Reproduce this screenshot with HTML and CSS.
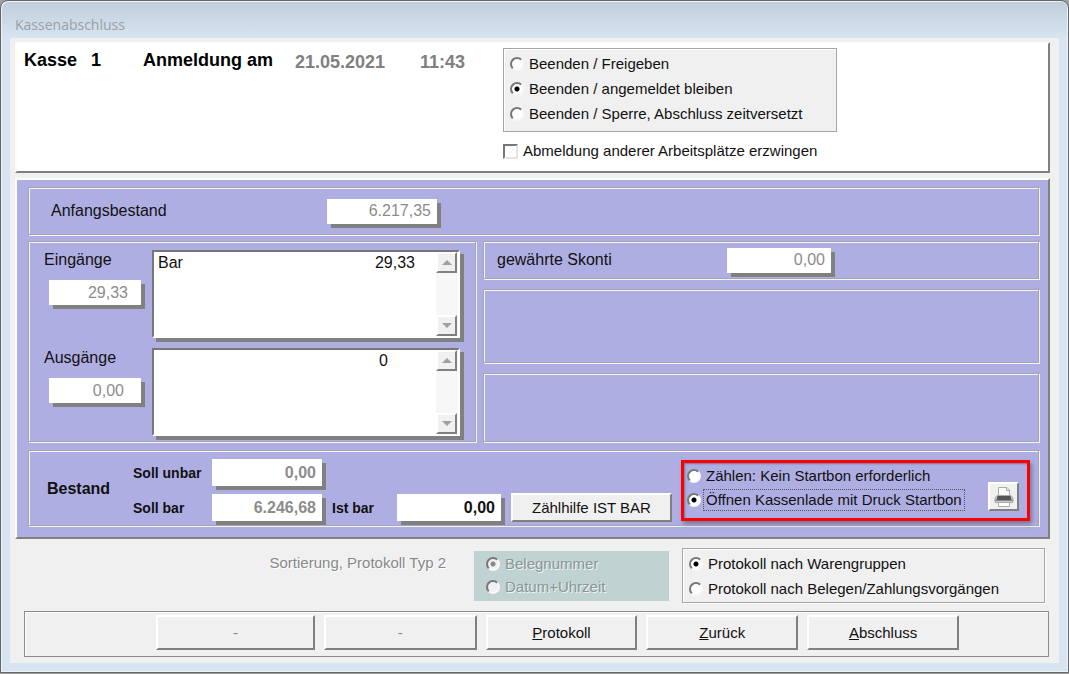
FILE: index.html
```html
<!DOCTYPE html>
<html lang="de">
<head>
<meta charset="utf-8">
<title>Kassenabschluss</title>
<link rel="stylesheet" href="styles.css">
</head>
<body>
<main class="window">
  <h1 class="titlebar">Kassenabschluss</h1>
  <form class="client">
    <section class="panel session">
      <div class="session-info">
        <span class="register">Kasse</span>
        <span class="register-no">1</span>
        <span class="login-label">Anmeldung am</span>
        <span class="login-date">21.05.2021</span>
        <span class="login-time">11:43</span>
      </div>
      <div class="session-options">
        <div class="etched finish" role="radiogroup" aria-label="Beenden">
          <label class="choice"><input type="radio" name="finish">Beenden / Freigeben</label>
          <label class="choice"><input type="radio" name="finish" checked>Beenden / angemeldet bleiben</label>
          <label class="choice"><input type="radio" name="finish">Beenden / Sperre, Abschluss zeitversetzt</label>
        </div>
        <label class="choice"><input type="checkbox">Abmeldung anderer Arbeitsplätze erzwingen</label>
      </div>
    </section>

    <section class="panel totals">
      <div class="groove opening">
        <label class="caption" for="opening">Anfangsbestand</label>
        <input class="field" id="opening" value="6.217,35" disabled>
      </div>
      <div class="flows">
        <div class="groove movements">
          <div class="movement">
            <div class="movement-sum">
              <label class="caption" for="income">Eingänge</label>
              <input class="field income" id="income" value="29,33" disabled>
            </div>
            <div class="list">
              <table class="entries"><tr><td>Bar</td><td class="amount">29,33</td></tr></table>
              <div class="scrollbar">
                <button type="button" class="raised scroll" aria-label="Nach oben"><svg viewBox="0 0 10 5"><path d="M5 0L10 5H0Z"/></svg></button>
                <button type="button" class="raised scroll" aria-label="Nach unten"><svg viewBox="0 0 10 5"><path d="M0 0H10L5 5Z"/></svg></button>
              </div>
            </div>
          </div>
          <div class="movement">
            <div class="movement-sum">
              <label class="caption" for="expense">Ausgänge</label>
              <input class="field expense" id="expense" value="0,00" disabled>
            </div>
            <div class="list">
              <table class="entries"><tr><td></td><td class="amount zero">0</td></tr></table>
              <div class="scrollbar">
                <button type="button" class="raised scroll" aria-label="Nach oben"><svg viewBox="0 0 10 5"><path d="M5 0L10 5H0Z"/></svg></button>
                <button type="button" class="raised scroll" aria-label="Nach unten"><svg viewBox="0 0 10 5"><path d="M0 0H10L5 5Z"/></svg></button>
              </div>
            </div>
          </div>
        </div>
        <div class="extras">
          <div class="groove discount">
            <label class="caption" for="discount">gewährte Skonti</label>
            <input class="field" id="discount" value="0,00" disabled>
          </div>
          <div class="groove spare"></div>
          <div class="groove spare low"></div>
        </div>
      </div>
      <div class="groove balance">
        <strong class="balance-title">Bestand</strong>
        <div class="balance-grid">
          <label for="noncash">Soll unbar</label>
          <input class="field strong" id="noncash" value="0,00" disabled>
          <label for="cash">Soll bar</label>
          <input class="field strong" id="cash" value="6.246,68" disabled>
        </div>
        <div class="actual">
          <label for="actual">Ist bar</label>
          <input class="field strong" id="actual" value="0,00">
          <button type="button" class="raised helper">Zählhilfe IST BAR</button>
        </div>
        <div class="start">
          <div class="start-options" role="radiogroup" aria-label="Startbon">
            <label class="choice"><input type="radio" name="start"><span class="start-text">Zählen: Kein Startbon erforderlich</span></label>
            <label class="choice"><input type="radio" name="start" checked><span class="start-text focused">Öffnen Kassenlade mit Druck Startbon</span></label>
          </div>
          <button type="button" class="raised print" aria-label="Drucken">
            <svg viewBox="0 0 20 22">
              <path d="M4.500 10V1.500H13L15.500 4V10" fill="#fafafa" stroke="#aaa"/>
              <path d="M12.500 1.500V4.500H15.500" fill="none" stroke="#aaa"/>
              <path d="M3 9.500H17L19 12V16.500H1V12Z" fill="#c9c9c9" stroke="#aaa"/>
              <path d="M3.500 10H16.500L17.500 14H2.500Z" fill="#555"/>
              <path d="M1 14.500H19" stroke="#888" stroke-width="1"/>
              <path d="M4.500 16.500H15.500V20.500H4.500Z" fill="#fff" stroke="#aaa"/>
            </svg>
          </button>
        </div>
      </div>
    </section>

    <section class="report">
      <span class="report-label">Sortierung, Protokoll Typ 2</span>
      <fieldset class="sorting" disabled aria-label="Sortierung">
        <label class="choice"><input type="radio" name="sort" checked>Belegnummer</label>
        <label class="choice"><input type="radio" name="sort">Datum+Uhrzeit</label>
      </fieldset>
      <div class="etched report-kind" role="radiogroup" aria-label="Protokoll">
        <label class="choice"><input type="radio" name="kind" checked>Protokoll nach Warengruppen</label>
        <label class="choice"><input type="radio" name="kind">Protokoll nach Belegen/Zahlungsvorgängen</label>
      </div>
    </section>

    <section class="actions">
      <button type="button" class="raised" disabled>-</button>
      <button type="button" class="raised" disabled>-</button>
      <button type="button" class="raised"><u>P</u>rotokoll</button>
      <button type="button" class="raised"><u>Z</u>urück</button>
      <button type="button" class="raised"><u>A</u>bschluss</button>
    </section>
  </form>
</main>
</body>
</html>
```
FILE: styles.css
```css
:root {
  --face: #f0f0f0;
  --frame: #d7e4f2;
  --violet: #afaee3;
  --shade: #808080;
}

* { box-sizing: border-box; }

body {
  margin: 0;
  background: #a0a0a0;
  color: #111;
  font: 15px/18px "Liberation Sans", Arial, sans-serif;
}

input, button { font: inherit; color: inherit; margin: 0; }

.window {
  display: flex;
  flex-direction: column;
  min-height: calc(100vh - 1px);
  border: 1px solid #666;
  border-radius: 8px 8px 0 0;
  padding: 0 9px 9px;
  background: linear-gradient(#c0cddb, var(--frame) 38px);
  box-shadow: inset 1px 1px #eef3f9, inset -1px -1px #eef3f9;
}

.titlebar {
  margin: 0;
  padding: 14px 5px 4px;
  font: 14px/19px "Open Sans", "Noto Sans", sans-serif;
  color: #9c9fa3;
}

.client {
  flex: 1;
  display: flex;
  flex-direction: column;
  padding: 4px 9px 6px 5px;
  background: var(--face);
}

.panel {
  border: 2px solid;
  border-color: #fcfcfc var(--shade) var(--shade) #fcfcfc;
}

.session {
  display: flex;
  height: 131px;
  background: #fff;
}

.session-info {
  flex: 0 0 486px;
  display: grid;
  grid-template-columns: 67px 52px 152px 125px auto;
  align-items: start;
  padding: 5px 0 0 7px;
  font-size: 18px;
  line-height: 22px;
  font-weight: bold;
}

.register, .register-no, .login-label { color: #000; }
.login-date, .login-time { color: var(--shade); padding-top: 2px; }

.session-options {
  display: flex;
  flex-direction: column;
  align-items: flex-start;
  gap: 10px;
  padding-top: 4px;
}

.etched {
  border: 1px solid #a6a6a6;
  box-shadow: 1px 1px #fff, inset 1px 1px #fff;
  background: var(--face);
}

.finish {
  display: grid;
  align-content: start;
  gap: 7px;
  width: 334px;
  padding: 6px 6px 8px;
}

.choice { display: flex; align-items: center; gap: 5px; white-space: nowrap; }

input[type="radio"] {
  appearance: none;
  width: 14px;
  height: 14px;
  border: 2px solid;
  border-color: #777 #f8f8f8 #f8f8f8 #777;
  border-radius: 50%;
  background: #fff;
}

input[type="radio"]:checked {
  background: radial-gradient(circle, #000 2px, #fff 3px);
}

input[type="radio"]:disabled { background: var(--face); }
input[type="radio"]:disabled:checked {
  background: radial-gradient(circle, #888 2px, var(--face) 3px);
}

input[type="checkbox"] {
  appearance: none;
  width: 15px;
  height: 15px;
  border: 2px solid;
  border-color: #777 #e4e4e4 #e4e4e4 #777;
  background: #fff;
}

.totals {
  margin-top: 5px;
  padding: 7px 9px 11px 11px;
  background: var(--violet);
}

.groove {
  border: 1px solid #a6a5ae;
  box-shadow: 1px 1px #f4f4f8, inset 1px 1px #f4f4f8;
}

.caption { font-size: 16px; }

.field {
  width: 110px;
  height: 25px;
  padding: 0 6px;
  border: 0;
  border-radius: 0;
  background: #fff;
  box-shadow: 4px 4px var(--shade);
  font-size: 16px;
  text-align: right;
}

.field:disabled { color: #8c8c8c; }

.opening {
  display: flex;
  align-items: center;
  height: 48px;
  padding-left: 22px;
}

.opening .caption { width: 276px; }

.flows { display: flex; gap: 7px; margin: 6px 0 8px; }

.movements {
  flex: 0 0 448px;
  display: grid;
  gap: 10px;
  padding: 8px 15px 5px;
}

.movement { display: flex; justify-content: space-between; }
.movement-sum { display: grid; align-content: start; gap: 10px; }
.movement-sum .caption { line-height: 20px; }
.movement-sum .field { width: 92px; margin-left: 5px; }
.movement .income { padding-right: 13px; }
.movement .expense { padding-right: 17px; }

.list {
  display: flex;
  width: 308px;
  height: 88px;
  border: 2px solid;
  border-color: #777 #fff #fff #777;
  background: #fff;
  box-shadow: 4px 4px var(--shade);
}

.entries { flex: 1; align-self: flex-start; border-collapse: collapse; font-size: 16px; line-height: 22px; }
.entries td { padding: 0 0 0 4px; }
.entries .amount { padding: 0 21px 0 0; text-align: right; }
.entries .zero { padding-right: 48px; }

.scrollbar {
  display: flex;
  flex-direction: column;
  justify-content: space-between;
  width: 22px;
  background: #f7f7f7;
}

.raised {
  border: 2px solid;
  border-color: #fff var(--shade) var(--shade) #fff;
  border-radius: 0;
  background: var(--face);
  padding: 0;
}

.raised:disabled { color: #888; }

.scroll { display: grid; place-items: center; width: 21px; height: 21px; }
.scroll svg { width: 10px; height: 5px; fill: #a0a0a0; }

.extras { flex: 1; display: flex; flex-direction: column; gap: 10px; }

.discount {
  display: flex;
  align-items: center;
  height: 38px;
  padding-left: 13px;
}

.discount .caption { width: 230px; }
.discount .field { width: 104px; }

.spare { height: 74px; }
.low { flex: 1; }

.balance {
  display: flex;
  align-items: flex-start;
  height: 76px;
  padding: 8px 8px 0 18px;
}

.balance-title { width: 86px; padding-top: 21px; font-size: 16px; }

.balance-grid {
  display: grid;
  grid-template-columns: 79px 110px;
  row-gap: 8px;
  align-items: center;
  font-size: 14px;
  font-weight: bold;
}

.strong { height: 27px; font-weight: bold; }

.actual {
  display: flex;
  align-items: center;
  margin: 34px 0 0 10px;
}

.actual label { width: 65px; font-size: 14px; font-weight: bold; }
.actual .field { width: 104px; }
.helper { width: 161px; height: 29px; margin-left: 10px; }

.start {
  flex: 1;
  display: flex;
  justify-content: space-between;
  align-items: flex-end;
  margin: 1px 0 0 9px;
  padding: 2px 8px 7px 3px;
  border: 3px solid #ff0000;
  box-shadow: 2px 3px 4px #77779a, inset 1px 1px 2px #77779a;
}

.start-options { display: grid; gap: 2px; }
.start .choice { gap: 2px; }
.start-text { padding: 1px 2px; border: 1px dotted transparent; }
.focused { border-color: #555; }

.print { display: grid; place-items: center; width: 31px; height: 29px; }
.print svg { width: 20px; height: 22px; }

.report {
  display: flex;
  justify-content: flex-end;
  align-items: center;
  padding: 9px 5px 0 0;
}

.report-label {
  margin: -25px 28px 0 0;
  color: #888;
  text-shadow: 1px 1px #fff;
}

.sorting {
  display: grid;
  gap: 5px;
  width: 195px;
  height: 50px;
  margin: 0 13px 0 0;
  padding: 4px 12px;
  border: 0;
  background: #c0d2d2;
  color: #8b9696;
  text-shadow: 1px 1px #eef4f4;
}

.report-kind { display: grid; gap: 7px; width: 363px; height: 55px; padding: 6px; }

.actions {
  display: grid;
  grid-template-columns: 159fr 153fr 152fr 152fr 152fr;
  column-gap: 9px;
  margin: 8px 1px 0 9px;
  padding: 3px 89px 6px 131px;
  border: 1px solid #8c8c8c;
  box-shadow: inset 1px 1px #fff;
}

.actions .raised { height: 35px; }
```
